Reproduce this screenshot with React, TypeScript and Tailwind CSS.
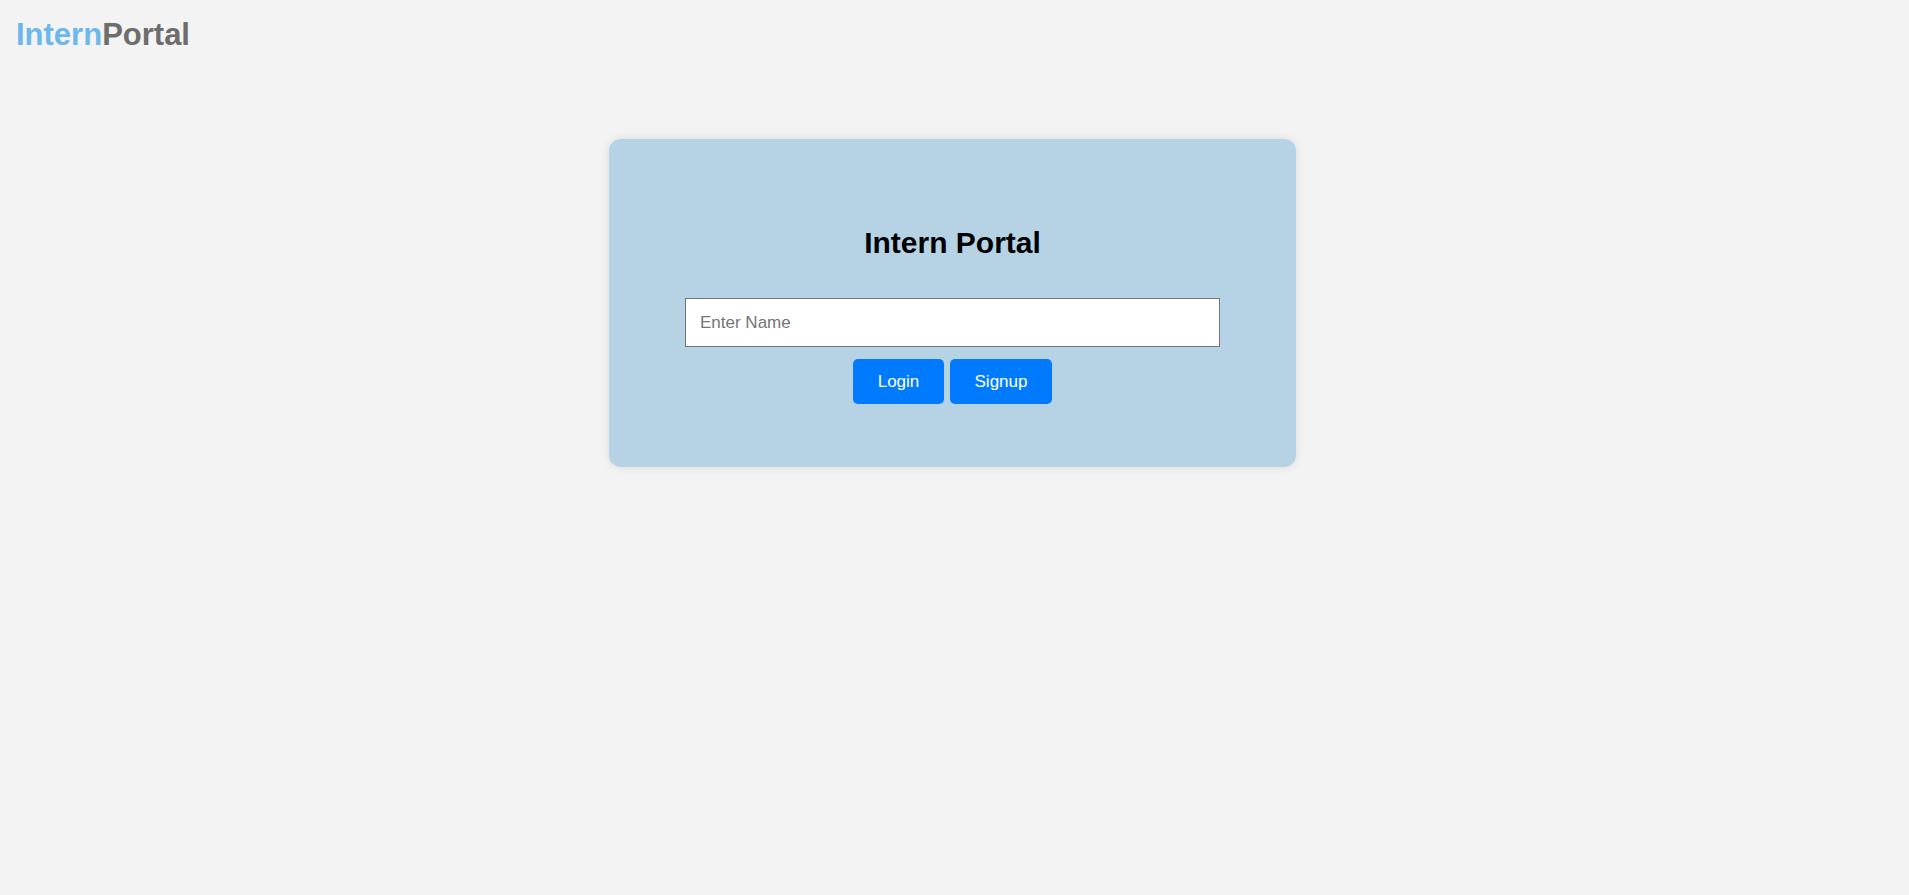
import { useState } from 'react';

export default function App() {
  const [name, setName] = useState('');

  return (
    <div className="min-h-screen bg-[#f3f3f3] font-['Liberation_Sans',Arial,sans-serif]">
      {/* Logo */}
      <header className="pl-[16px] pt-[18px]">
        <h1 className="text-[31px] font-bold leading-[34px]">
          <span className="text-[#6cb8eb]">Intern</span>
          <span className="text-[#6d6d6d]">Portal</span>
        </h1>
      </header>

      {/* Login card */}
      <div className="flex justify-center pt-[87px] pr-[4px]">
        <div className="w-[687px] h-[328px] rounded-[12px] bg-[#b5d3e5] shadow-[0_0_10px_rgba(0,0,0,0.1)] flex flex-col items-center pt-[87px]">
          <h2 className="text-[30px] font-bold leading-[34px] text-black">Intern Portal</h2>
          <input
            type="text"
            value={name}
            onChange={(e) => setName(e.target.value)}
            placeholder="Enter Name"
            className="mt-[38px] w-[535px] h-[49px] bg-white border border-[#767676] px-[14px] text-[17px] text-black placeholder:text-[#757575] outline-none"
          />
          <div className="mt-[12px] flex gap-[6px]">
            <button className="w-[91px] h-[45px] rounded-[5px] bg-[#007bff] text-white text-[17px]">
              Login
            </button>
            <button className="w-[102px] h-[45px] rounded-[5px] bg-[#007bff] text-white text-[17px]">
              Signup
            </button>
          </div>
        </div>
      </div>
    </div>
  );
}
